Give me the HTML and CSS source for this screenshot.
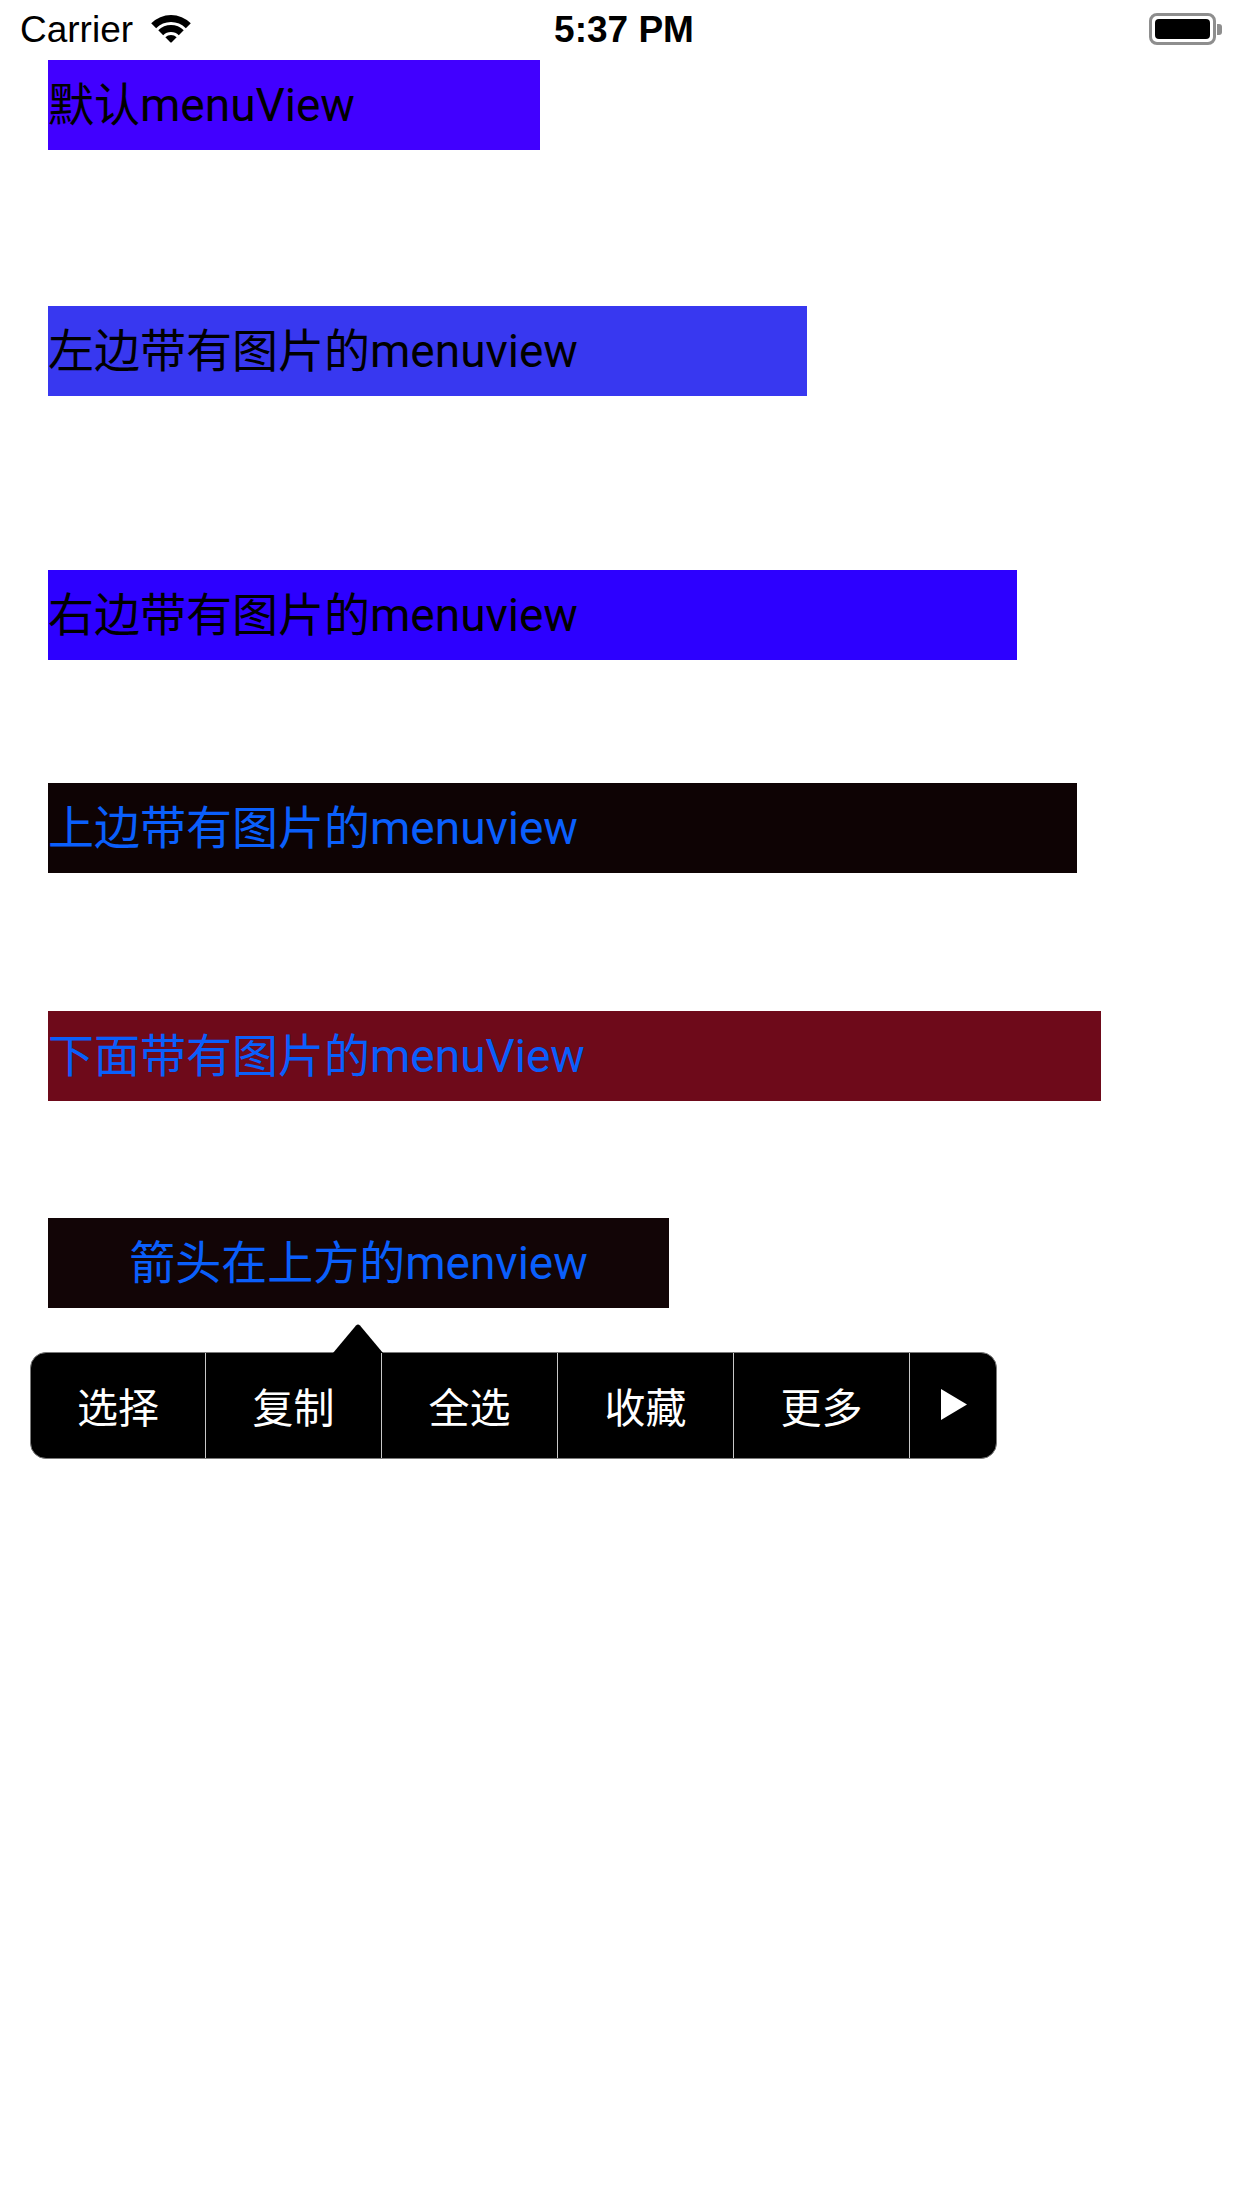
FILE: index.html
```html
<!DOCTYPE html>
<html lang="zh-CN">
<head>
<meta charset="utf-8">
<title>menuView</title>
<link rel="stylesheet" href="styles.css">
</head>
<body>
<div class="statusbar">
  <div class="sb-left">
    <span class="carrier">Carrier</span>
    <svg class="wifi" width="40" height="31" viewBox="0 0 40 31">
      <path d="M0.2 9.2 A28 28 0 0 1 39.8 9.2 L34.85 14.15 A21 21 0 0 0 5.15 14.15 Z"/>
      <path d="M7.27 16.27 A18 18 0 0 1 32.73 16.27 L27.78 21.22 A11 11 0 0 0 12.22 21.22 Z"/>
      <path d="M14.34 23.34 A8 8 0 0 1 25.66 23.34 L21 28 Q20 29 19 28 Z"/>
    </svg>
  </div>
  <div class="time">5:37 PM</div>
  <div class="sb-right">
    <div class="battery"><div class="battery-fill"></div></div>
    <div class="battery-nub"></div>
  </div>
</div>

<main class="content">
  <div class="btn b1 dark-text">默认menuView</div>
  <div class="btn b2 dark-text">左边带有图片的menuview</div>
  <div class="btn b3 dark-text">右边带有图片的menuview</div>
  <div class="btn b4 blue-text">上边带有图片的menuview</div>
  <div class="btn b5 blue-text">下面带有图片的menuView</div>
  <div class="btn b6 blue-text center">箭头在上方的menview</div>

  <div class="menu-wrap">
    <svg class="menu-arrow" width="50" height="29" viewBox="0 0 50 29">
      <path d="M0 29 L23 1.5 Q25 -0.5 27 1.5 L50 29 Z" fill="#000"/>
    </svg>
    <div class="menu">
      <div class="menu-item">选择</div>
      <div class="menu-item">复制</div>
      <div class="menu-item">全选</div>
      <div class="menu-item">收藏</div>
      <div class="menu-item">更多</div>
      <div class="menu-item more">
        <svg width="26" height="31" viewBox="0 0 26 31"><path d="M0 0 L26 15.5 L0 31 Z" fill="#fff"/></svg>
      </div>
    </div>
  </div>
</main>
</body>
</html>
```

FILE: styles.css
```css
* { box-sizing: border-box; }
html, body {
  margin: 0;
  padding: 0;
  background: #fff;
}
body {
  width: 1242px;
  height: 2208px;
  font-family: "Liberation Sans", "Noto Sans CJK SC", sans-serif;
  overflow: hidden;
}

.statusbar {
  height: 60px;
  display: grid;
  grid-template-columns: 1fr auto 1fr;
  align-items: center;
  padding: 0 20px;
}
.sb-left {
  display: flex;
  align-items: center;
  gap: 18px;
  margin-top: -2px;
}
.carrier {
  font-size: 37px;
  color: #000;
  line-height: 1;
}
.wifi { fill: #000; }
.time {
  font-size: 37px;
  font-weight: bold;
  color: #000;
  line-height: 1;
  margin-top: -2px;
  margin-left: 6px;
}
.sb-right {
  display: flex;
  justify-content: flex-end;
  align-items: center;
  margin-top: -2px;
}
.battery {
  width: 67px;
  height: 32px;
  border: 3px solid #8e8e8e;
  border-radius: 8px;
  padding: 3px;
}
.battery-fill {
  width: 100%;
  height: 100%;
  background: #000;
  border-radius: 4px;
}
.battery-nub {
  width: 5px;
  height: 11px;
  background: #8e8e8e;
  border-radius: 0 3px 3px 0;
  margin-left: 1px;
}

.content {
  display: flex;
  flex-direction: column;
  align-items: flex-start;
  padding-left: 48px;
}
.btn {
  height: 90px;
  display: flex;
  align-items: center;
  font-family: Roboto, "Noto Sans CJK SC", sans-serif;
  font-size: 46px;
  line-height: 1;
  white-space: nowrap;
}
.btn.center { justify-content: center; }
.dark-text { color: #000; }
.blue-text { color: #0a5ffc; }

.b1 { width: 492px; background: #4100ff; margin-top: 0; }
.b2 { width: 759px; background: #3838f0; margin-top: 156px; }
.b3 { width: 969px; background: #2d00ff; margin-top: 174px; }
.b4 { width: 1029px; background: #0e0304; margin-top: 123px; }
.b5 { width: 1053px; background: #6e0a1a; margin-top: 138px; }
.b6 { width: 621px; background: #120506; margin-top: 117px; }

.menu-wrap {
  margin-left: -18px;
  margin-top: 16px;
  display: flex;
  flex-direction: column;
}
.menu-arrow {
  display: block;
  margin-left: 303px;
  margin-bottom: -1px;
  position: relative;
  z-index: 1;
}
.menu {
  width: 967px;
  height: 107px;
  background: #000;
  border: 1px solid #7a7a7a;
  border-radius: 16px;
  display: flex;
  overflow: hidden;
}
.menu-item {
  width: 176px;
  flex: none;
  display: flex;
  align-items: center;
  justify-content: center;
  color: #fff;
  font-family: "Noto Sans CJK SC", sans-serif;
  font-size: 41px;
  border-right: 1px solid #c8c8c8;
  padding-bottom: 2px;
}
.menu-item:first-child { width: 175px; }
.menu-item.more {
  flex: 1;
  border-right: none;
  padding-left: 2px;
}
```
